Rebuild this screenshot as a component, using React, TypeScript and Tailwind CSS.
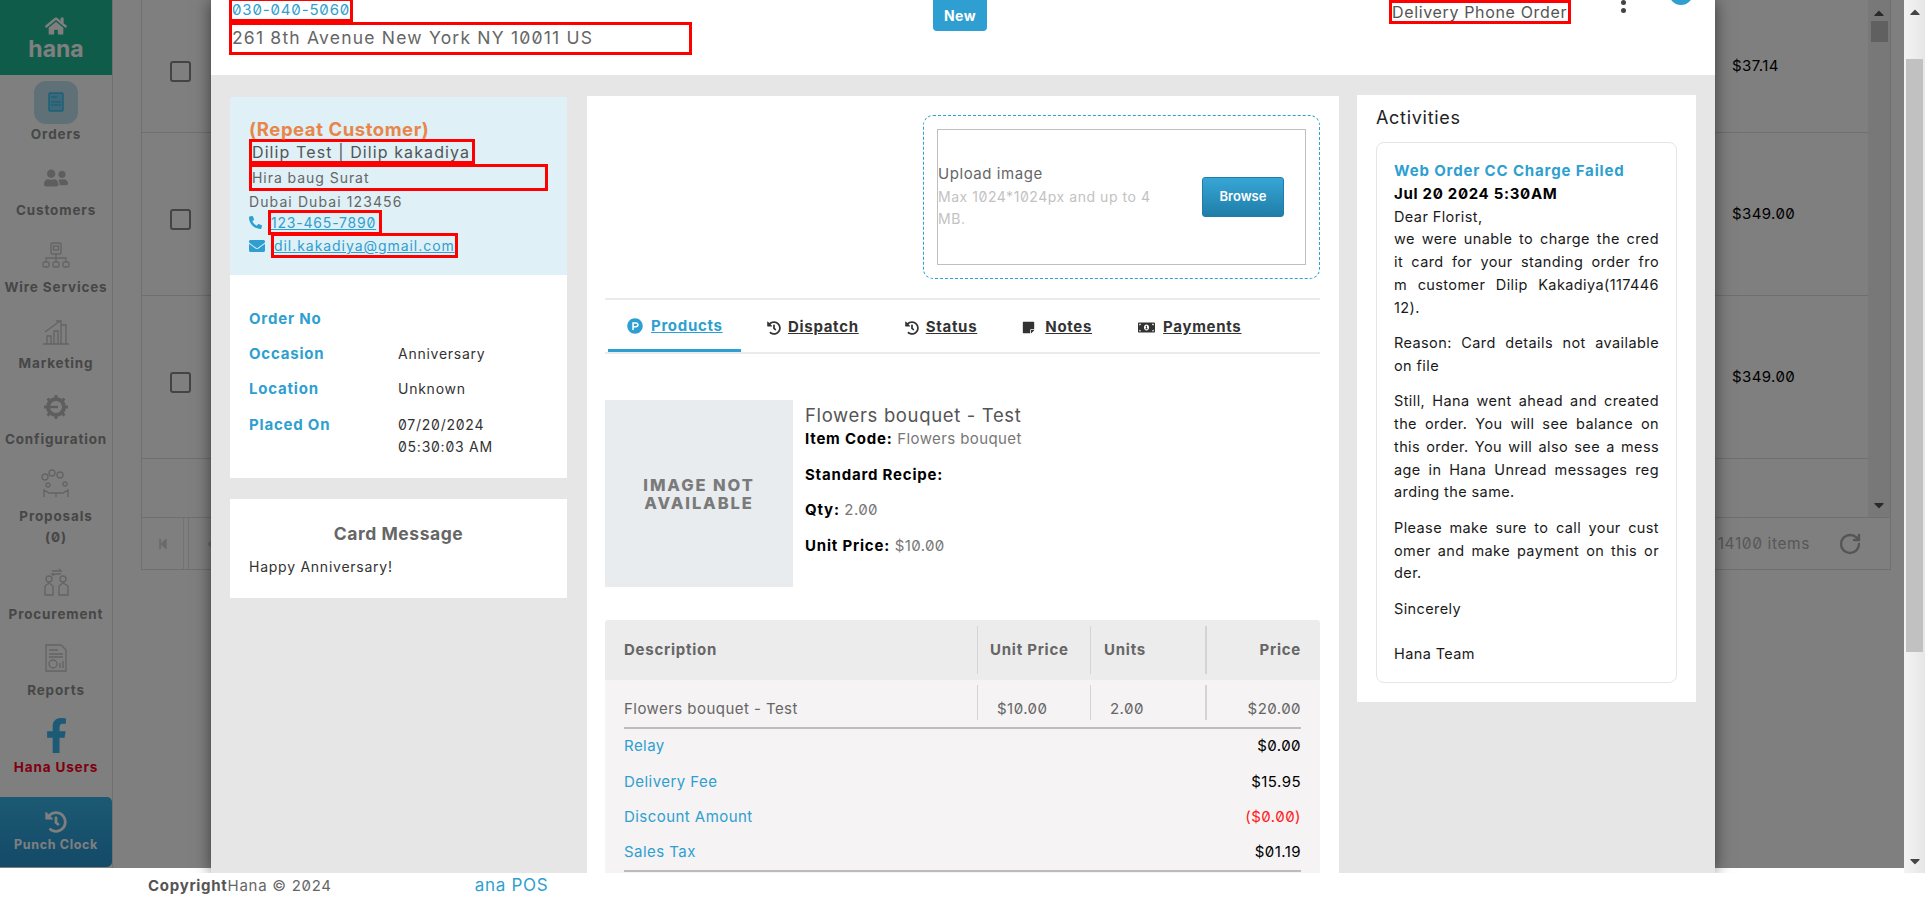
import type { ReactNode } from 'react';
import {
  FaCaretDown,
  FaCaretLeft,
  FaCaretUp,
  FaEnvelope,
  FaFacebookF,
  FaHistory,
  FaHome,
  FaMoneyBillAlt,
  FaPhoneAlt,
  FaProductHunt,
  FaStepBackward,
  FaStickyNote,
  FaUserFriends,
} from 'react-icons/fa';
import { RotateCw } from 'lucide-react';

function LineIcon({ children }: { children: ReactNode }) {
  return (
    <svg width="32" height="32" viewBox="0 0 32 32" fill="none" stroke="#c8c8c8" strokeWidth="1.4">
      {children}
    </svg>
  );
}

function NavItem({ icon, label, className = '' }: { icon: ReactNode; label: ReactNode; className?: string }) {
  return (
    <div className={`flex flex-col items-center justify-end pb-[8px] ${className}`}>
      <div className="flex h-[44px] items-center justify-center">{icon}</div>
      <div className="text-center text-[13.5px] leading-[21px] font-bold tracking-[0.85px] whitespace-nowrap text-[#8e8e8e]">{label}</div>
    </div>
  );
}

function Sidebar() {
  return (
    <aside className="flex h-full w-[113px] shrink-0 flex-col border-r border-[#e0e0e0]">
      <div className="flex h-[75px] flex-col items-center justify-center bg-[#1eb894] text-white">
        <FaHome className="mt-[1px] h-[22px] w-[22px]" />
        <div className="text-[23px] leading-[25px] font-bold">hana</div>
      </div>
      <NavItem
        className="h-[78px]"
        label="Orders"
        icon={
          <div className="flex h-[43px] w-[44px] items-center justify-center rounded-[12px] bg-[#bfe3ef]">
            <svg width="16" height="20" viewBox="0 0 16 20" fill="#7fd0ee" stroke="#38c0f8" strokeWidth="1.5">
              <rect x="1" y="1" width="14" height="18" rx="1" />
              <path d="M3 5h6M3 10h10M3 13h10" />
            </svg>
          </div>
        }
      />
      <NavItem className="h-[76px]" label="Customers" icon={<FaUserFriends className="h-[24px] w-[24px] text-[#bcbcbc]" />} />
      <NavItem
        className="h-[77px]"
        label="Wire Services"
        icon={
          <LineIcon>
            <rect x="11" y="4" width="10" height="11" rx="1.5" />
            <rect x="13.5" y="7" width="5" height="4" />
            <path d="M16 15v8M6 23v-4h20v4" />
            <rect x="3" y="23" width="6" height="5" rx="1.5" />
            <rect x="13" y="23" width="6" height="5" rx="1.5" />
            <rect x="23" y="23" width="6" height="5" rx="1.5" />
          </LineIcon>
        }
      />
      <NavItem
        className="h-[76px]"
        label="Marketing"
        icon={
          <LineIcon>
            <path d="M3 29h26M7 29v-8h4v8M14 29V16h4v13M21 29V10h5v19M5 17 20 6M16 6h5v4" />
          </LineIcon>
        }
      />
      <NavItem
        className="h-[76px]"
        label="Configuration"
        icon={
          <svg width="26" height="26" viewBox="0 0 26 26" fill="none" stroke="#bdbdbd">
            <circle cx="13" cy="13" r="8" strokeWidth="4" />
            <path d="M13 1v4M13 21v4M1 13h4M21 13h4M4.500 4.500l3 3M18.500 18.500l3 3M21.500 4.500l-3 3M7.500 18.500l-3 3" strokeWidth="3" />
            <path d="M3 13h12" strokeWidth="2.500" />
          </svg>
        }
      />
      <NavItem
        className="h-[98px]"
        label={
          <>
            Proposals
            <br />
            (0)
          </>
        }
        icon={
          <LineIcon>
            <circle cx="5" cy="9" r="3" />
            <circle cx="12" cy="5" r="3" />
            <circle cx="20" cy="7" r="3" />
            <circle cx="8" cy="17" r="2" />
            <circle cx="25" cy="16" r="2" />
            <path d="M4 29v-7l5 3h14l5-3v7M10 25h12M16 25v4" />
          </LineIcon>
        }
      />
      <NavItem
        className="h-[77px]"
        label="Procurement"
        icon={
          <LineIcon>
            <circle cx="9" cy="13" r="3" />
            <circle cx="23" cy="13" r="3" />
            <path d="M5 29V20l4-3 4 3v9zM19 29V20l4-3 5 3v9zM12 5h9l-2-2M21 8h-9l2 2" />
          </LineIcon>
        }
      />
      <NavItem
        className="h-[76px]"
        label="Reports"
        icon={
          <LineIcon>
            <path d="M6 3h15l5 5v21H6z" />
            <path d="M9 8h9M9 12h14M9 15h14" />
            <circle cx="13" cy="22" r="4" />
            <path d="M20 26v-5M23 26v-7" />
          </LineIcon>
        }
      />
      <NavItem
        className="h-[77px]"
        label={<span className="text-[#ff0022]">Hana Users</span>}
        icon={<FaFacebookF className="h-[35px] w-[35px] text-[#38b4ea]" />}
      />
      <div className="mt-[11px] flex h-[70px] w-[112px] flex-col items-center justify-center rounded-r-[5px] bg-gradient-to-b from-[#38b4e6] to-[#2694d0] text-white">
        <FaHistory className="h-[22px] w-[22px]" />
        <div className="mt-[3px] text-[12.5px] leading-[18px] font-bold tracking-[0.65px]">Punch Clock</div>
      </div>
    </aside>
  );
}

function OrderRow({ height, price }: { height: string; price: string }) {
  return (
    <div className={`flex items-center border-b border-[#dedede] pl-[28px] ${height}`}>
      <div className="mt-[10px] h-[21px] w-[21px] rounded-[3px] border-2 border-[#888]" />
      <div className="ml-auto w-[136px] pt-[1px] text-[15px] tracking-[0.4px] text-black">{price}</div>
    </div>
  );
}

function OrdersGrid() {
  return (
    <main className="ml-[28px] flex h-[570px] w-[1750px] flex-col border-x border-b border-[#dedede]">
      <div className="flex h-[518px] border-b border-[#dedede]">
        <div className="flex-1">
          <OrderRow height="h-[133px]" price="$37.14" />
          <OrderRow height="h-[163px]" price="$349.00" />
          <OrderRow height="h-[163px]" price="$349.00" />
        </div>
        <div className="flex w-[22px] flex-col items-center bg-[#f0f0f0] text-[#555]">
          <FaCaretUp className="mt-[5px] h-[16px] w-[16px]" />
          <div className="h-[21px] w-[17px] bg-[#c0c0c0]" />
          <FaCaretDown className="mt-auto mb-[4px] h-[16px] w-[16px]" />
        </div>
      </div>
      <div className="flex flex-1 items-center text-[#d4d4d4]">
        <div className="flex h-full w-[42px] items-center justify-center border-r border-[#e6e6e6]">
          <FaStepBackward className="h-[12px] w-[12px]" />
        </div>
        <div className="ml-[4px] flex h-full w-[42px] items-center justify-center border-l border-[#e6e6e6]">
          <FaCaretLeft className="h-[16px] w-[16px]" />
        </div>
        <div className="mr-[28px] ml-auto text-[15.5px] tracking-[0.6px] text-[#b0b0b0]">14100 items</div>
        <RotateCw className="mr-[28px] h-[24px] w-[24px] text-[#aaa]" strokeWidth={2.4} />
      </div>
    </main>
  );
}

function Boxed({ className, children }: { className: string; children: ReactNode }) {
  return <div className={`flex items-center whitespace-nowrap border-[3px] border-[#ff0000] ${className}`}>{children}</div>;
}

function ModalHeader() {
  return (
    <header className="flex h-[75px] shrink-0 items-start bg-white pl-[18px]">
      <div className="w-[704px]">
        <Boxed className="-mt-[2px] h-[24px] w-[124px] text-[15px] tracking-[0.85px] text-[#2e9fd0]">030-040-5060</Boxed>
        <Boxed className="h-[33px] w-[463px] text-[17.5px] tracking-[1.2px] text-[#666]">261 8th Avenue New York NY 10011 US</Boxed>
      </div>
      <div className="flex h-[31px] w-[54px] items-center justify-center rounded-b-[4px] bg-[#2e9fd0] text-[14px] font-bold tracking-[0.5px] text-white">
        New
      </div>
      <Boxed className="ml-[402px] h-[24px] w-[182px] text-[16px] tracking-[0.65px] text-[#555]">Delivery Phone Order</Boxed>
      <div className="ml-[50px] flex w-[5px] flex-col gap-[3px]">
        <div className="h-[5px] w-[5px] rounded-full bg-[#444]" />
        <div className="h-[5px] w-[5px] rounded-full bg-[#444]" />
      </div>
      <div className="ml-[43px] -mt-[19px] h-[24px] w-[24px] rounded-full bg-[#2e9fd0]" />
    </header>
  );
}

function InfoRow({ label, children }: { label: string; children?: ReactNode }) {
  return (
    <div className="mb-[13.2px] flex leading-[22px]">
      <div className="w-[149px] text-[15px] font-bold tracking-[0.8px] text-[#2e9fd0]">{label}</div>
      <div className="text-[14px] tracking-[0.75px] text-[#333]">{children}</div>
    </div>
  );
}

function CustomerColumn() {
  return (
    <div className="mt-[2px] w-[337px] shrink-0">
      <div className="h-[178px] bg-[#dff0f7] pt-[21px] pl-[19px]">
        <div className="h-[22px] text-[18.5px] leading-[22px] font-bold tracking-[0.55px] text-[#e8864a]">(Repeat Customer)</div>
        <Boxed className="-mt-[1px] h-[25px] w-[226px] text-[16px] tracking-[1.1px] text-[#555]">Dilip Test | Dilip kakadiya</Boxed>
        <Boxed className="h-[27px] w-[299px] text-[14px] tracking-[0.95px] text-[#666]">Hira baug Surat</Boxed>
        <div className="h-[20px] text-[14px] leading-[22px] tracking-[1.1px] text-[#666]">Dubai Dubai 123456</div>
        <div className="-mt-[1px] flex items-center">
          <FaPhoneAlt className="h-[13px] w-[13px] text-[#2e9fd0]" />
          <Boxed className="ml-[6px] h-[25px] w-[114px] text-[14px] tracking-[0.8px] text-[#2e9fd0] underline">123-465-7890</Boxed>
        </div>
        <div className="-mt-[2px] flex items-center">
          <FaEnvelope className="h-[16px] w-[16px] text-[#2e9fd0]" />
          <Boxed className="ml-[6px] h-[25px] w-[187px] text-[14px] tracking-[0.95px] text-[#2e9fd0] underline">dil.kakadiya@gmail.com</Boxed>
        </div>
      </div>
      <div className="h-[203px] bg-white pt-[33px] pl-[19px]">
        <InfoRow label="Order No" />
        <InfoRow label="Occasion">Anniversary</InfoRow>
        <InfoRow label="Location">Unknown</InfoRow>
        <InfoRow label="Placed On">
          07/20/2024
          <br />
          05:30:03 AM
        </InfoRow>
      </div>
      <div className="mt-[21px] h-[99px] bg-white px-[19px] pt-[23px]">
        <div className="text-center text-[17.5px] leading-[24px] font-bold tracking-[0.55px] text-[#666]">Card Message</div>
        <div className="mt-[10px] text-[14px] leading-[22px] tracking-[0.75px] text-[#333]">Happy Anniversary!</div>
      </div>
    </div>
  );
}

function Tab({ icon, label, active, className }: { icon: ReactNode; label: string; active?: boolean; className: string }) {
  return (
    <div className={`flex h-full items-center pt-[3px] ${className}`}>
      {icon}
      <span className={`text-[15px] font-bold tracking-[0.7px] underline ${active ? 'text-[#2e9fd0]' : 'text-[#333]'}`}>{label}</span>
    </div>
  );
}

function TotalRow({ label, value, valueClass = 'text-black' }: { label: string; value: string; valueClass?: string }) {
  return (
    <div className="flex h-[35.3px] items-center justify-between text-[15px] tracking-[0.45px]">
      <span className="text-[#2e9fd0]">{label}</span>
      <span className={valueClass}>{value}</span>
    </div>
  );
}

function DetailColumn() {
  return (
    <div className="mt-[1px] ml-[20px] h-[900px] w-[752px] shrink-0 bg-white pr-[19px] pl-[18px]">
      <div className="flex justify-end pt-[19px]">
        <div className="h-[164px] w-[397px] rounded-[10px] border border-dashed border-[#2e9fd0] p-[13px]">
          <div className="flex h-full items-center border border-[#bfbfbf]">
            <div className="w-[222px] leading-[22.5px] tracking-[0.55px]">
              <div className="text-[15px] text-[#666]">Upload image</div>
              <div className="text-[14px] text-[#c2c2c2]">Max 1024*1024px and up to 4 MB.</div>
            </div>
            <button className="mr-[21px] ml-auto h-[40px] w-[82px] rounded-[3px] border border-[#1f7ea8] bg-gradient-to-b from-[#37a6d6] to-[#1f7ea8] text-[13px] font-semibold text-white">
              Browse
            </button>
          </div>
        </div>
      </div>
      <div className="mt-[19px] flex h-[56px] items-stretch border-y-2 border-[#ebebeb]">
        <Tab
          active
          label="Products"
          className="ml-[3px] -mb-[2px] w-[133px] border-b-[3px] border-[#2e9fd0] pl-[19px]"
          icon={<FaProductHunt className="mr-[8px] h-[16px] w-[16px] text-[#2e9fd0]" />}
        />
        <Tab label="Dispatch" className="ml-[26px]" icon={<FaHistory className="mr-[7px] h-[14px] w-[14px] text-[#333]" />} />
        <Tab label="Status" className="ml-[46px]" icon={<FaHistory className="mr-[7px] h-[14px] w-[14px] text-[#333]" />} />
        <Tab label="Notes" className="ml-[45px]" icon={<FaStickyNote className="mr-[10px] h-[13px] w-[13px] text-[#333]" />} />
        <Tab label="Payments" className="ml-[46px]" icon={<FaMoneyBillAlt className="mr-[8px] h-[17px] w-[17px] text-[#333]" />} />
      </div>
      <div className="mt-[46px] flex">
        <div className="flex h-[187px] w-[188px] items-center justify-center bg-[#e9ecef] text-center text-[16.5px] leading-[18px] font-extrabold tracking-[1.9px] text-[#7a7a7a]">
          IMAGE NOT
          <br />
          AVAILABLE
        </div>
        <div className="ml-[12px] pt-[3px] text-[15px] leading-[22px] tracking-[0.4px]">
          <div className="mb-[1px] text-[18.500px] leading-[24px] tracking-[0.65px] text-[#555]">Flowers bouquet - Test</div>
          <div className="mb-[13.500px] text-[#777]">
            <b className="tracking-[0.8px] text-black">Item Code:</b> Flowers bouquet
          </div>
          <div className="mb-[13.500px]">
            <b className="tracking-[0.8px] text-black">Standard Recipe:</b>
          </div>
          <div className="mb-[13.500px] text-[#777]">
            <b className="tracking-[0.8px] text-black">Qty:</b> 2.00
          </div>
          <div className="text-[#777]">
            <b className="tracking-[0.8px] text-black">Unit Price:</b> $10.00
          </div>
        </div>
      </div>
      <div className="mt-[33px]">
        <div className="flex h-[60px] items-center rounded-t-[3px] bg-[#ececec] text-[15px] font-bold tracking-[0.75px] text-[#666]">
          <div className="w-[372px] pl-[19px]">Description</div>
          <div className="flex h-[48px] w-[113px] items-center border-l border-[#d4d4d4] pl-[12px]">Unit Price</div>
          <div className="flex h-[48px] w-[115px] items-center border-l border-[#d4d4d4] pl-[13px]">Units</div>
          <div className="flex h-[48px] flex-1 items-center justify-end border-l-2 border-[#d4d4d4] pr-[19px]">Price</div>
        </div>
        <div className="h-[260px] bg-[#f5f3f4] px-[19px]">
          <div className="flex h-[49px] items-end border-b-2 border-[#bcbcbc] pb-[7px] text-[15px] tracking-[0.45px] text-[#666]">
            <div className="w-[353px]">Flowers bouquet - Test</div>
            <div className="flex h-[35px] w-[113px] items-end border-l border-[#d4d4d4] pl-[19px]">$10.00</div>
            <div className="flex h-[35px] w-[115px] items-end border-l border-[#d4d4d4] pl-[19px]">2.00</div>
            <div className="flex h-[35px] flex-1 items-end justify-end border-l-2 border-[#d4d4d4]">$20.00</div>
          </div>
          <TotalRow label="Relay" value="$0.00" />
          <TotalRow label="Delivery Fee" value="$15.95" />
          <TotalRow label="Discount Amount" value="($0.00)" valueClass="text-[#ff1a1a]" />
          <TotalRow label="Sales Tax" value="$01.19" />
          <div className="border-t-2 border-[#bcbcbc]" />
        </div>
      </div>
    </div>
  );
}

const activity = [
  { lines: ['we were unable to charge the cred', 'it card for your standing order fro', 'm customer Dilip Kakadiya(117446'], last: '12).' },
  { lines: ['Reason: Card details not available'], last: 'on file' },
  { lines: ['Still, Hana went ahead and created', 'the order. You will see balance on', 'this order. You will also see a mess', 'age in Hana Unread messages reg'], last: 'arding the same.' },
  { lines: ['Please make sure to call your cust', 'omer and make payment on this or'], last: 'der.' },
];

function ActivityColumn() {
  return (
    <div className="ml-[18px] w-[339px] shrink-0 bg-white px-[19px] pt-[10px] pb-[19px]">
      <div className="text-[18px] leading-[26px] tracking-[0.7px] text-[#222]">Activities</div>
      <div className="mt-[11px] rounded-[8px] border border-[#e5e5e5] px-[17px] pt-[17px] pb-[17px] text-[14.5px] leading-[22.75px] tracking-[0.4px] text-[#1a1a1a]">
        <div className="text-[15px] font-bold tracking-[0.85px] text-[#2e9fd0]">Web Order CC Charge Failed</div>
        <div className="text-[15px] font-bold tracking-[0.7px] text-black">Jul 20 2024 5:30AM</div>
        <div>Dear Florist,</div>
        {activity.map((para, i) => (
          <div key={i} className={i === 0 ? '' : 'mt-[12.8px]'}>
            {para.lines.map((line) => (
              <div key={line} className="whitespace-nowrap [text-align:justify] [text-align-last:justify]">
                {line}
              </div>
            ))}
            <div>{para.last}</div>
          </div>
        ))}
        <div className="mt-[12.8px]">Sincerely</div>
        <div className="mt-[22px]">Hana Team</div>
      </div>
    </div>
  );
}

export default function App() {
  return (
    <div className="relative h-[904px] w-full overflow-hidden bg-white font-['Inter',sans-serif] slashed-zero">
      <div className="flex h-[868px] w-[1904px]">
        <Sidebar />
        <OrdersGrid />
      </div>
      <footer className="flex h-[36px] items-center pl-[148px] text-[15px] tracking-[0.72px] text-[#666]">
        <b className="text-[#555]">Copyright</b>
        <span>Hana © 2024</span>
        <span className="ml-[143px] text-[17px] text-[#2e9fd0]">ana POS</span>
      </footer>

      {/* backdrop + page scrollbar sit over the page */}
      <div className="absolute top-0 left-0 h-[868px] w-[1904px] bg-black/50" />
      <div className="absolute top-0 right-0 flex h-[873px] w-[21px] flex-col items-center bg-gradient-to-r from-[#f4f4f4] to-[#e6e6e6] text-[#444]">
        <FaCaretUp className="mt-[4px] h-[16px] w-[16px]" />
        <div className="mt-[39px] h-[593px] w-[17px] bg-[#c1c1c1]" />
        <FaCaretDown className="mt-auto mb-[4px] h-[16px] w-[16px]" />
      </div>

      <div className="absolute top-0 left-[211px] flex h-[873px] w-[1504px] flex-col overflow-hidden bg-[#e6e6e6] shadow-[0_0_16px_rgba(0,0,0,0.55)] [clip-path:inset(0_-24px_0_-24px)]">
        <ModalHeader />
        <div className="flex items-start pt-[20px] pl-[19px]">
          <CustomerColumn />
          <DetailColumn />
          <ActivityColumn />
        </div>
      </div>
    </div>
  );
}
